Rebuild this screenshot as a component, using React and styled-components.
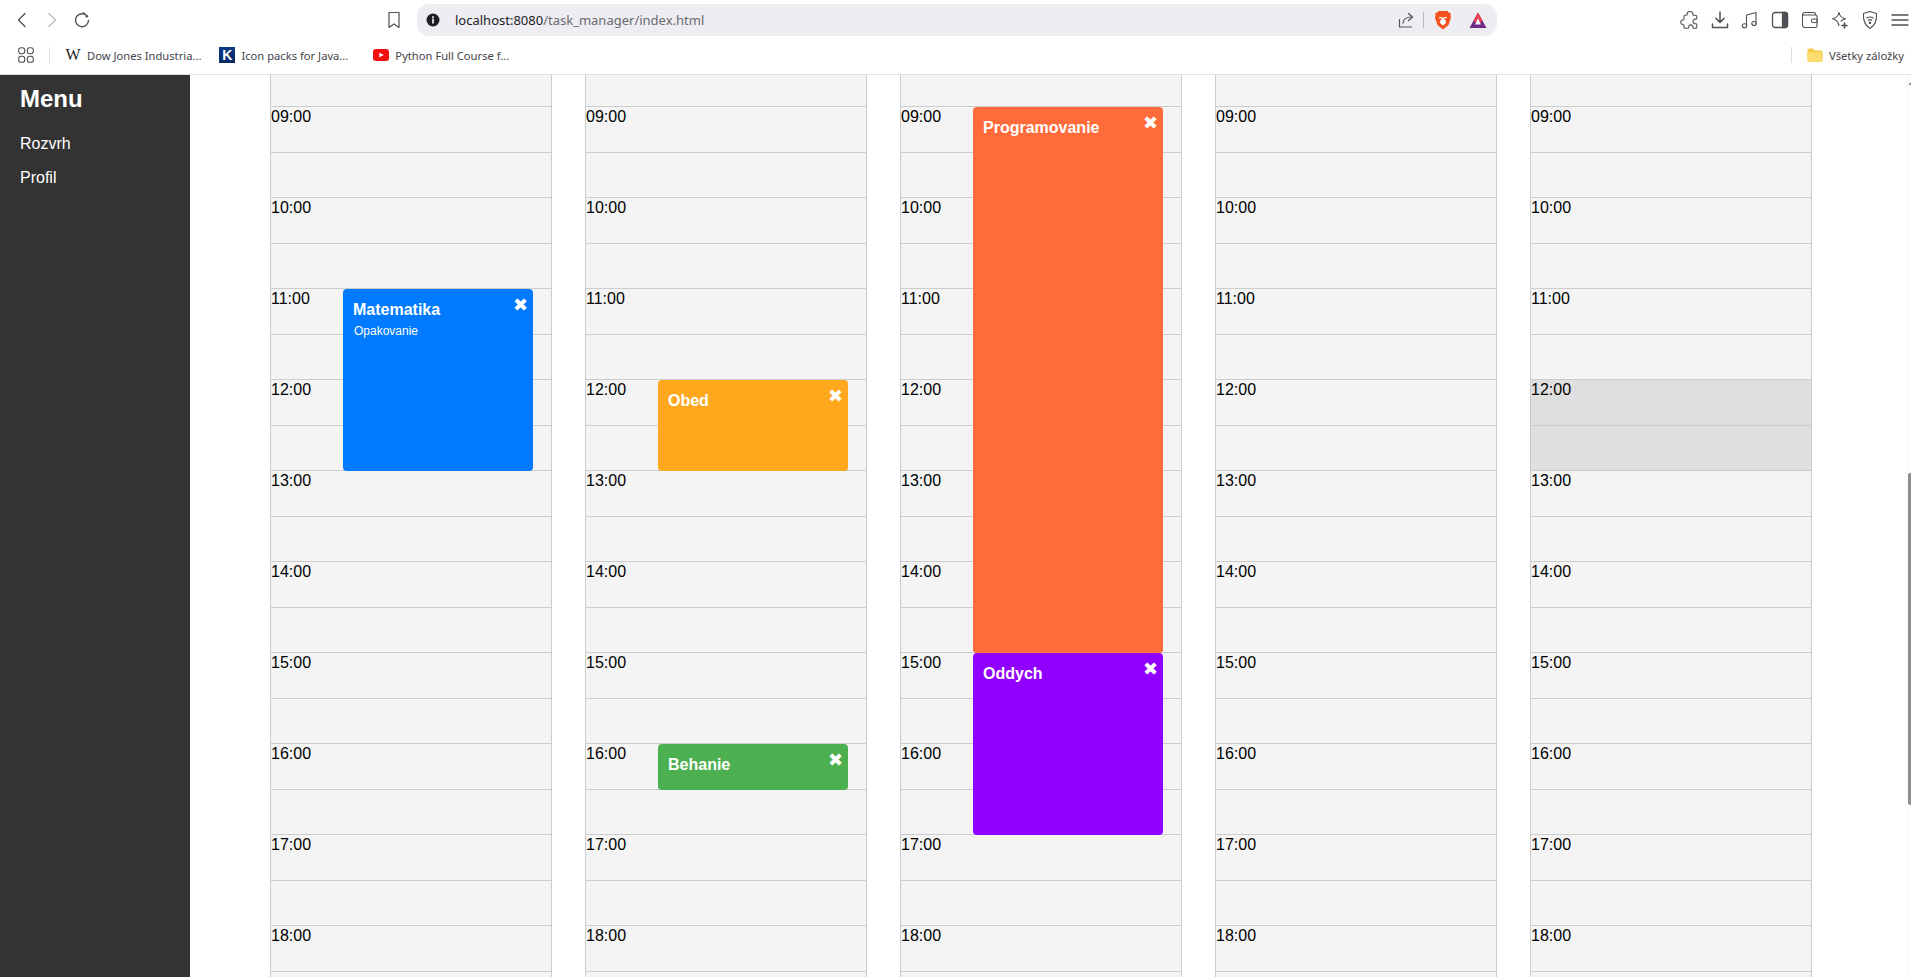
import React from "react";
import styled, { createGlobalStyle } from "styled-components";

const GlobalStyle = createGlobalStyle`
  html, body {
    margin: 0;
    padding: 0;
    height: 100%;
    overflow: hidden;
    background: #fff;
    font-family: "Liberation Sans", Arial, sans-serif;
  }
`;

const Chrome = styled.div`
  height: 75px;
  box-sizing: border-box;
  border-bottom: 1px solid #e2e2e2;
  background: #fff;
`;

const Toolbar = styled.div`
  height: 40px;
  display: flex;
  align-items: center;
  padding-left: 7px;
`;

const NavButton = styled.div`
  width: 30px;
  height: 30px;
  display: flex;
  align-items: center;
  justify-content: center;
  flex: none;
`;

const BookmarkButton = styled(NavButton)`
  margin-left: 287px;
  margin-right: 13px;
  width: 20px;
`;

const UrlPill = styled.div`
  width: 1080px;
  height: 32px;
  border-radius: 12px;
  background: #eeedf2;
  display: flex;
  align-items: center;
  padding: 0 10px 0 9px;
  box-sizing: border-box;
  flex: none;
`;

const UrlText = styled.div`
  margin-left: 15px;
  font-family: "Noto Sans", sans-serif;
  font-size: 13px;
  color: #6a6a70;
  flex: 1;
`;

const UrlHost = styled.span`
  color: #222226;
`;

const PillDivider = styled.div`
  width: 1px;
  height: 16px;
  background: #b9b9be;
  margin: 0 10px 0 8px;
`;

const PillIcon = styled.div`
  display: flex;
  margin-left: ${(p) => p.$gap || 0}px;
`;

const ExtensionGroup = styled.div`
  display: flex;
  margin-left: 183px;
  gap: 10px;
`;

const BookmarkBar = styled.div`
  height: 34px;
  display: flex;
  align-items: center;
  padding-left: 18px;
  padding-bottom: 4px;
  box-sizing: border-box;
`;

const BarDivider = styled.div`
  width: 1px;
  height: 16px;
  background: #dedee2;
  margin: 0 15px;
`;

const Bookmark = styled.div`
  display: flex;
  align-items: center;
  gap: 6px;
  margin-right: ${(p) => p.$after}px;
  font-family: "Noto Sans", sans-serif;
  font-size: 11.2px;
  color: #44444a;
  white-space: nowrap;
`;

const WikiMark = styled.span`
  width: 16px;
  font-family: "Liberation Serif", serif;
  font-size: 16px;
  color: #222;
  text-align: center;
`;

const KMark = styled.span`
  width: 16px;
  height: 16px;
  background: linear-gradient(#0c3a86, #062a64);
  color: #fff;
  font-family: "Liberation Sans", sans-serif;
  font-weight: 700;
  font-size: 14px;
  line-height: 16px;
  text-align: center;
`;

const Spacer = styled.div`
  flex: 1;
`;

const Body = styled.div`
  position: relative;
  height: 902px;
  overflow: hidden;
  display: flex;
`;

const Sidebar = styled.aside`
  width: 190px;
  flex: none;
  background: #333;
  color: #fff;
  padding: 10px 20px;
  box-sizing: border-box;
`;

const MenuTitle = styled.h2`
  margin: 0 0 22px;
  font-size: 24px;
  line-height: 28px;
  font-weight: 700;
`;

const MenuItem = styled.a`
  display: block;
  font-size: 16px;
  line-height: 18px;
  margin-bottom: 16px;
  color: #fff;
`;

const Calendar = styled.main`
  display: flex;
  gap: 33px;
  padding-left: 80px;
`;

const DayColumn = styled.section`
  position: relative;
  width: 282px;
  box-sizing: border-box;
  border-left: 1px solid #ccc;
  border-right: 1px solid #ccc;
  background: #f4f4f4;
`;

const TopSlot = styled.div`
  height: 31px;
`;

const Slot = styled.div`
  height: 45.5px;
  box-sizing: border-box;
  border-top: 1px solid #ccc;
  font-size: 16px;
  line-height: 18px;
  padding-top: 1px;
  color: #000;
  background: ${(p) => (p.$busy ? "#dfdfdf" : "transparent")};
`;

const Event = styled.div`
  position: absolute;
  left: 72px;
  width: 190px;
  box-sizing: border-box;
  border-radius: 4px;
  padding: 12px 10px;
  color: #fff;
  background: ${(p) => p.$color};
`;

const EventTitle = styled.div`
  font-size: 16px;
  line-height: 18px;
  font-weight: 700;
`;

const EventNote = styled.div`
  margin-top: 5px;
  padding-left: 1px;
  font-size: 12px;
  line-height: 14px;
`;

const CloseMark = styled.span`
  position: absolute;
  top: 5px;
  right: 5px;
  font-family: "DejaVu Sans", sans-serif;
  font-size: 18px;
  line-height: 21px;
  color: #fff;
`;

const ScrollTrack = styled.div`
  position: absolute;
  top: 0;
  right: 0;
  bottom: 0;
  width: 6px;
  background: #fcfcfc;
`;

const ScrollArrow = styled.div`
  position: absolute;
  top: 7px;
  right: 0;
  border-left: 3px solid transparent;
  border-bottom: 3px solid #8f8f8f;
`;

const ScrollThumb = styled.div`
  position: absolute;
  top: 398px;
  right: 0;
  width: 3px;
  height: 332px;
  border-radius: 2px 0 0 2px;
  background: #8f8f8f;
`;

const Icon = ({ w = 18, h = 18, box = "0 0 18 18", color = "#505056", sw = 1.4, children }) => (
  <svg width={w} height={h} viewBox={box} fill="none" stroke={color} strokeWidth={sw} strokeLinecap="round" strokeLinejoin="round">
    {children}
  </svg>
);

const hours = ["09", "10", "11", "12", "13", "14", "15", "16", "17", "18"];

const days = [
  { events: [{ title: "Matematika", note: "Opakovanie", slot: 4, span: 4, color: "#007bff" }] },
  {
    events: [
      { title: "Obed", slot: 6, span: 2, color: "#ffa81d" },
      { title: "Behanie", slot: 14, span: 1, color: "#4caf50" },
    ],
  },
  {
    events: [
      { title: "Programovanie", slot: 0, span: 12, color: "#ff6b3a" },
      { title: "Oddych", slot: 12, span: 4, color: "#9100ff" },
    ],
  },
  { events: [] },
  { events: [], busy: [6, 7] },
];

const slots = hours.flatMap((h) => [`${h}:00`, ""]);

const Day = ({ day }) => (
  <DayColumn>
    <TopSlot />
    {slots.map((label, i) => (
      <Slot key={i} $busy={day.busy && day.busy.includes(i)}>
        {label}
      </Slot>
    ))}
    {day.events.map((ev) => (
      <Event
        key={ev.title}
        $color={ev.color}
        style={{ top: 32 + ev.slot * 45.5, height: ev.span * 45.5 }}
      >
        <EventTitle>{ev.title}</EventTitle>
        {ev.note && <EventNote>{ev.note}</EventNote>}
        <CloseMark>✖</CloseMark>
      </Event>
    ))}
  </DayColumn>
);

const App = () => (
  <>
    <GlobalStyle />
    <Chrome>
      <Toolbar>
        <NavButton>
          <Icon><path d="M12 2.5 5.5 9l6.5 6.5" /></Icon>
        </NavButton>
        <NavButton>
          <Icon color="#bdbdc2"><path d="M6 2.5 12.5 9 6 15.5" /></Icon>
        </NavButton>
        <NavButton>
          <Icon>
            <path d="M15.5 9.5A6.5 6.5 0 1 1 11.5 3.2" />
            <circle cx="13.8" cy="5.2" r="1.3" fill="#505056" stroke="none" />
            <path d="M10.5 1.8 13.5 4.5" />
          </Icon>
        </NavButton>
        <BookmarkButton>
          <Icon w={14} h={18} box="0 0 14 18" sw={1.2}>
            <path d="M2 1.5h10v15l-5-3.6-5 3.6z" />
          </Icon>
        </BookmarkButton>
        <UrlPill>
          <Icon w={14} h={14} box="0 0 14 14" color="none">
            <circle cx="7" cy="7" r="6.5" fill="#1f1f23" />
            <path d="M7 6.2v3.8M7 3.8v.8" stroke="#fff" strokeWidth="1.6" />
          </Icon>
          <UrlText>
            <UrlHost>localhost:8080</UrlHost>/task_manager/index.html
          </UrlText>
          <Icon w={18} h={18} sw={1.2}>
            <path d="M2.5 8.5v7.5h12" />
            <path d="M6 12c.5-3.5 3-6 8-6" />
            <path d="M11.5 2.5 15.5 6l-4 3.5" />
          </Icon>
          <PillDivider />
          <PillIcon>
            <svg width="18" height="20" viewBox="0 0 18 20">
              <path d="M4.5 1h9l1.5 1.8 2 .4-.6 2 .6 2.5L14.5 15 9 19.5 3.5 15 1 7.7l.6-2.5-.6-2 2-.4z" fill="#f4511e" />
              <path d="M5 7h3l1 1.4L10 7h3l-1.6 3.2.9 2.6L9 15.5l-3.3-2.7.9-2.6z" fill="#fff" />
              <circle cx="6.8" cy="9" r="0.9" fill="#f4511e" />
              <circle cx="11.2" cy="9" r="0.9" fill="#f4511e" />
            </svg>
          </PillIcon>
          <PillIcon $gap={17}>
            <svg width="18" height="17" viewBox="0 0 18 17">
              <path d="M9 0.5 17.5 16H0.5z" fill="#6f2a86" />
              <path d="M9 0.5 13.3 8.4 11.1 11 9 6.2 6.9 11 4.7 8.4z" fill="#ee3f4e" />
              <path d="M9 6.2 11.9 12.5H6.1z" fill="#fff" />
            </svg>
          </PillIcon>
        </UrlPill>
        <ExtensionGroup>
          <Icon w={20} h={20} box="0 0 20 20" sw={1.1}>
            <path d="M7.2 4.2c-.3-1.6 1-2.7 2.8-2.7s3.1 1.1 2.8 2.7c-.1.7.4 1 1 1h1.7a1.3 1.3 0 0 1 1.3 1.3v1.7c0 .6-.5 1-1.1.9-1.5-.3-2.7.7-2.7 2.3s1.2 2.6 2.7 2.3c.6-.1 1.1.3 1.1.9V17a1.3 1.3 0 0 1-1.3 1.3h-1.7c-.6 0-1-.5-.9-1.1.2-1.3-.8-2.3-2.1-2.3s-2.4 1-2.1 2.3c.1.6-.3 1.1-.9 1.1H5.3A1.3 1.3 0 0 1 4 17v-1.5c0-.6-.4-1-1-1-1.3.2-2.2-.8-2.2-2.3S1.7 9.8 3 10c.6 0 1-.4 1-1V6.500a1.3 1.3 0 0 1 1.3-1.3h1c.6 0 1-.4.9-1z" />
          </Icon>
          <Icon w={20} h={20} box="0 0 20 20" sw={1.5}>
            <path d="M10 2v10M5.8 8.2 10 12.400l4.200-4.200" />
            <path d="M2.5 14v3.5h15V14" />
          </Icon>
          <Icon w={20} h={20} box="0 0 20 20" sw={1.1}>
            <path d="M6.5 15.500V5L16 2.500v11" />
            <ellipse cx="4.5" cy="15.7" rx="2.2" ry="2" />
            <ellipse cx="14" cy="13.5" rx="2.2" ry="2" />
          </Icon>
          <Icon w={20} h={20} box="0 0 20 20" sw={1.3}>
            <rect x="2.5" y="2.5" width="15" height="15" rx="2.5" />
            <path d="M12.5 2.5h2.5a2.500 2.500 0 0 1 2.500 2.500v10a2.500 2.500 0 0 1-2.500 2.500h-2.500z" fill="#505056" />
          </Icon>
          <Icon w={20} h={20} box="0 0 20 20" sw={1.1}>
            <path d="M15.5 5V4a1.500 1.500 0 0 0-1.500-1.500H5A2.500 2.500 0 0 0 2.500 5v10A2.500 2.500 0 0 0 5 17.500h10.500A1.500 1.500 0 0 0 17 16V6.500A1.500 1.500 0 0 0 15.500 5H2.800" />
            <rect x="11.5" y="9" width="6" height="3.5" rx="1.5" />
          </Icon>
          <Icon w={20} h={20} box="0 0 20 20" sw={1.1}>
            <path d="M9 2.5c.8 3.8 2.4 5.5 6.5 6.2-2 .5-3.5 1.3-4.5 2.5M9 2.500c-.8 3.800-2.400 5.500-6.500 6.200 3.600.7 5.500 2.600 6.500 6.800" />
            <path d="M14.5 13v5M12 15.500h5" strokeWidth="1.6" />
          </Icon>
          <Icon w={20} h={20} box="0 0 20 20" sw={1.1}>
            <path d="M10 1.5 16.500 3.500c.5 6.500-.8 11.500-6.500 15-5.700-3.500-7-8.500-6.500-15z" />
            <path d="M6.800 8c2-1.300 4.400-1.300 6.400 0M8.200 10.200c1.100-.7 2.500-.7 3.600 0" />
            <circle cx="10" cy="12.8" r="0.7" fill="#505056" />
          </Icon>
          <Icon w={20} h={20} box="0 0 20 20" sw={1.3}>
            <path d="M2 5h16M2 10h16M2 15h16" />
          </Icon>
        </ExtensionGroup>
      </Toolbar>
      <BookmarkBar>
        <Icon w={16} h={16} box="0 0 16 16" sw={1.1}>
          <rect x="0.7" y="0.7" width="6" height="6" rx="2.4" />
          <rect x="9.3" y="0.7" width="6" height="6" rx="2.4" />
          <rect x="0.7" y="9.3" width="6" height="6" rx="2.4" />
          <rect x="9.3" y="9.3" width="6" height="6" rx="2.4" />
        </Icon>
        <BarDivider />
        <Bookmark $after={18}>
          <WikiMark>W</WikiMark>
          Dow Jones Industria...
        </Bookmark>
        <Bookmark $after={25}>
          <KMark>K</KMark>
          Icon packs for Java...
        </Bookmark>
        <Bookmark $after={0}>
          <svg width="16" height="16" viewBox="0 0 16 16">
            <rect x="0" y="2" width="16" height="12" rx="3" fill="#f40f0f" />
            <path d="M6.3 5.500 10.700 8l-4.400 2.500z" fill="#fff" />
          </svg>
          Python Full Course f...
        </Bookmark>
        <Spacer />
        <BarDivider />
        <Bookmark $after={7}>
          <svg width="16" height="14" viewBox="0 0 16 14">
            <path d="M0.5 2A1.500 1.500 0 0 1 2 .5h4l2 2h6A1.500 1.500 0 0 1 15.500 4v8.500A1.500 1.500 0 0 1 14 14H2A1.500 1.500 0 0 1 .5 12.500z" fill="#f6cb4b" />
            <path d="M0.5 4.500h15V12.500A1.500 1.500 0 0 1 14 14H2A1.500 1.500 0 0 1 .5 12.500z" fill="#fcdc6d" />
          </svg>
          Všetky záložky
        </Bookmark>
      </BookmarkBar>
    </Chrome>
    <Body>
      <Sidebar>
        <MenuTitle>Menu</MenuTitle>
        <MenuItem>Rozvrh</MenuItem>
        <MenuItem>Profil</MenuItem>
      </Sidebar>
      <Calendar>
        {days.map((day, i) => (
          <Day key={i} day={day} />
        ))}
      </Calendar>
      <ScrollTrack>
        <ScrollArrow />
        <ScrollThumb />
      </ScrollTrack>
    </Body>
  </>
);

export default App;
